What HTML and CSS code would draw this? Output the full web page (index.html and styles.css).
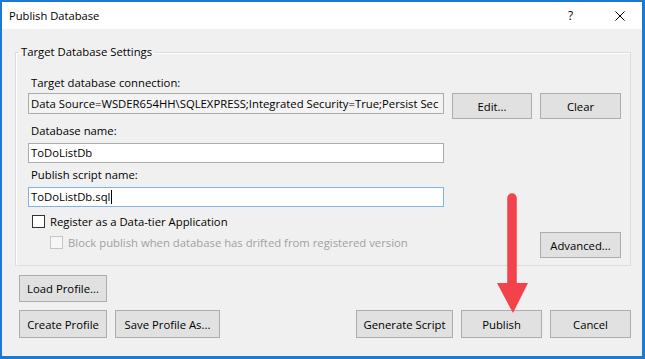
FILE: index.html
```html
<!DOCTYPE html>
<html lang="en">
  <head>
    <meta charset="UTF-8" />
    <meta name="viewport" content="width=device-width, initial-scale=1.0" />
    <title>Publish Database</title>
    <link rel="stylesheet" href="styles.css">
  </head>
  <body>
    <div class="window">
      <div class="titlebar">
        <span class="title">Publish Database</span>
        <span class="help">?</span>
        <span class="close">
          <svg width="10" height="10" viewBox="0 0 10 10">
            <path d="M0.5 0.5 L9.5 9.5 M9.5 0.5 L0.5 9.5" stroke="#000" stroke-width="1" fill="none" />
          </svg>
        </span>
      </div>

      <div class="content">
        <fieldset class="group">
          <legend>Target Database Settings</legend>

          <div class="label first">Target database connection:</div>
          <div class="conn-row">
            <div class="textbox readonly">Data Source=WSDER654HH\SQLEXPRESS;Integrated Security=True;Persist Sec</div>
            <button class="btn">Edit...</button>
            <button class="btn">Clear</button>
          </div>

          <div class="label">Database name:</div>
          <div class="textbox">ToDoListDb</div>

          <div class="label">Publish script name:</div>
          <div class="textbox focused">ToDoListDb.sql<span class="caret"></span></div>

          <div class="options">
            <div class="checks">
              <label class="check"><span class="box"></span>Register as a Data-tier Application</label>
              <label class="check sub disabled"><span class="box"></span>Block publish when database has drifted from registered version</label>
            </div>
            <button class="btn advanced">Advanced...</button>
          </div>
        </fieldset>

        <div class="profile-row">
          <button class="btn wide">Load Profile...</button>
        </div>

        <div class="actions">
          <div class="actions-left">
            <button class="btn wide">Create Profile</button>
            <button class="btn save">Save Profile As...</button>
          </div>
          <div class="actions-right">
            <button class="btn generate">Generate Script</button>
            <button class="btn">Publish</button>
            <button class="btn">Cancel</button>
          </div>
        </div>
      </div>

      <!-- red callout arrow drawn over the dialog -->
      <svg class="arrow" width="645" height="359" viewBox="0 0 645 359">
        <line x1="512" y1="198" x2="512" y2="288" stroke="#f2424b" stroke-width="9.5" stroke-linecap="round" />
        <polygon points="497,283 528,283 513,313" fill="#f2424b" />
      </svg>
    </div>
  </body>
</html>
```

FILE: styles.css
```css
/* dialog base */
* {
  box-sizing: border-box;
}
body {
  margin: 0;
  font-family: "Segoe UI", "Open Sans", sans-serif;
  font-size: 11.3px;
  color: #000;
}
.window {
  position: relative;
  width: 645px;
  height: 359px;
  border-style: solid;
  border-color: #1c79d4;
  border-width: 2px 3px 3px 2px;
  background-color: #f0f0f0;
}

/* title bar */
.titlebar {
  height: 27px;
  background-color: #fff;
  display: flex;
  align-items: center;
  padding: 0 0 0 7px;
}
.title {
  flex: 1;
  font-size: 11.2px;
}
.help {
  width: 14px;
  margin-right: 33px;
  font-size: 12px;
}
.close {
  width: 10px;
  margin-right: 17px;
  display: flex;
}

/* main area */
.content {
  padding: 15px 11px 0 13px;
}
.group {
  margin: 0;
  padding: 0 9px 7px 12px;
  border: 1px solid #dcdcdc;
  box-shadow: inset 1px 1px 0 #fff;
}
.group legend {
  margin-left: -9px;
  padding: 0 2px;
  line-height: 16px;
}
.label {
  line-height: 16px;
  padding-left: 3px;
  margin-top: 4px;
}
.label.first {
  margin-top: 15px;
}
.conn-row {
  margin-top: 2px;
  display: grid;
  grid-template-columns: 1fr 80px 81px;
  column-gap: 8px;
  align-items: start;
}
.textbox {
  height: 20px;
  margin-top: 4px;
  width: 416px;
  padding: 0 2px;
  line-height: 18px;
  border: 1px solid #acacac;
  background-color: #fff;
  white-space: nowrap;
  overflow: hidden;
}
.textbox.readonly {
  height: 21px;
  margin-top: 0;
  line-height: 19px;
  background-color: #f3f3f3;
}
.textbox.focused {
  border-color: #7eb4ea;
}
.caret {
  display: inline-block;
  width: 1px;
  height: 14px;
  margin-left: 1px;
  vertical-align: -3px;
  background-color: #000;
}

/* buttons */
.btn {
  height: 26px;
  padding: 0;
  border: 1px solid #adadad;
  background-color: #e1e1e1;
  font-family: inherit;
  font-size: 11.3px;
  color: #000;
}

/* check boxes */
.options {
  margin-top: 6px;
  display: flex;
  justify-content: space-between;
  align-items: flex-start;
}
.check {
  display: flex;
  align-items: center;
  height: 16px;
  padding-left: 4px;
}
.check .box {
  width: 13px;
  height: 13px;
  margin-right: 5px;
  border: 1px solid #333;
  background-color: #fff;
}
.check.sub {
  margin-top: 5px;
  padding-left: 22px;
}
.check.disabled {
  color: #a0a0a0;
}
.check.disabled .box {
  border-color: #c6c6c6;
  background-color: #f7f7f7;
}
.advanced {
  width: 81px;
  margin-top: 19px;
}

/* bottom buttons */
.profile-row {
  margin-top: 9px;
  padding-left: 4px;
}
.profile-row .btn {
  height: 27px;
}
.actions {
  margin-top: 8px;
  padding-left: 4px;
  display: flex;
  justify-content: space-between;
}
.actions .btn {
  height: 28px;
  width: 81px;
}
.actions-left,
.actions-right {
  display: flex;
  gap: 8px;
}
.actions .btn.wide,
.btn.wide {
  width: 88px;
}
.actions .btn.save {
  width: 105px;
}
.actions .btn.generate {
  width: 97px;
}

.arrow {
  position: absolute;
  left: -2px;
  top: -2px;
  pointer-events: none;
}
```
